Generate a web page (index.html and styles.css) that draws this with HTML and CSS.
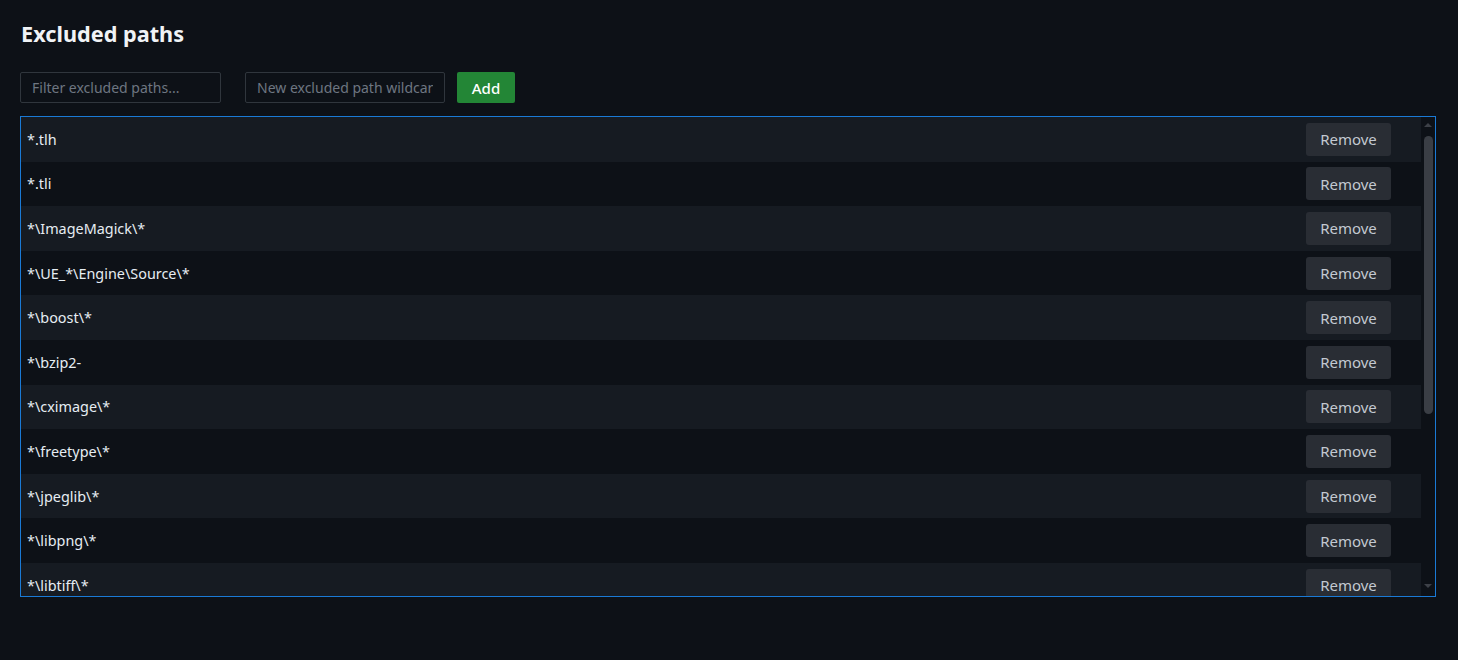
FILE: index.html
```html
<!DOCTYPE html>
<html lang="en">
<head>
<meta charset="utf-8">
<title>Excluded paths</title>
<link rel="stylesheet" href="styles.css">
</head>
<body>
<main class="page">
  <h1 class="title">Excluded paths</h1>
  <div class="toolbar">
    <input class="field" type="text" placeholder="Filter excluded paths...">
    <input class="field field-new" type="text" placeholder="New excluded path wildcard">
    <button class="btn-add">Add</button>
  </div>
  <div class="list">
    <div class="rows">
      <div class="row"><span class="path">*.tlh</span><button class="btn-remove">Remove</button></div>
      <div class="row"><span class="path">*.tli</span><button class="btn-remove">Remove</button></div>
      <div class="row"><span class="path">*\ImageMagick\*</span><button class="btn-remove">Remove</button></div>
      <div class="row"><span class="path">*\UE_*\Engine\Source\*</span><button class="btn-remove">Remove</button></div>
      <div class="row"><span class="path">*\boost\*</span><button class="btn-remove">Remove</button></div>
      <div class="row"><span class="path">*\bzip2-</span><button class="btn-remove">Remove</button></div>
      <div class="row"><span class="path">*\cximage\*</span><button class="btn-remove">Remove</button></div>
      <div class="row"><span class="path">*\freetype\*</span><button class="btn-remove">Remove</button></div>
      <div class="row"><span class="path">*\jpeglib\*</span><button class="btn-remove">Remove</button></div>
      <div class="row"><span class="path">*\libpng\*</span><button class="btn-remove">Remove</button></div>
      <div class="row"><span class="path">*\libtiff\*</span><button class="btn-remove">Remove</button></div>
    </div>
    <div class="scrollbar" aria-hidden="true">
      <div class="arrow arrow-up"></div>
      <div class="track"><div class="thumb"></div></div>
      <div class="arrow arrow-down"></div>
    </div>
  </div>
</main>
</body>
</html>
```

FILE: styles.css
```css
html, body {
  margin: 0;
  padding: 0;
  background: #0d1117;
  color: #e6edf3;
  font-family: "Noto Sans", "Open Sans", sans-serif;
}

.page {
  padding: 18px 22px 0 20px;
}

.title {
  margin: 0 0 22px 1px;
  font-size: 21.7px;
  font-weight: 700;
  line-height: 32px;
  color: #f0f3f6;
}

.toolbar {
  display: flex;
  align-items: center;
  margin-bottom: 13px;
}

.field {
  box-sizing: border-box;
  width: 201px;
  height: 31px;
  margin: 0 24px 0 0;
  padding: 0 11px;
  background: #0d1117;
  border: 1px solid #30363d;
  border-radius: 2px;
  color: #e6edf3;
  font-family: inherit;
  font-size: 14px;
  outline: none;
}

.field::placeholder {
  color: #6e7681;
}

.field-new {
  width: 200px;
  margin-right: 12px;
}

.btn-add {
  box-sizing: border-box;
  width: 58px;
  height: 31px;
  border: none;
  border-radius: 2px;
  background: #238636;
  color: #ffffff;
  font-family: inherit;
  font-size: 15px;
  font-weight: 500;
  cursor: pointer;
}

.list {
  box-sizing: border-box;
  height: 481px;
  border: 1px solid #1a7ad6;
  display: flex;
  overflow: hidden;
}

.rows {
  flex: 1;
  min-width: 0;
  overflow: hidden;
}

.row {
  display: flex;
  align-items: center;
  justify-content: space-between;
  height: 44.6px;
  padding: 0 30px 0 6px;
}

.row:nth-child(odd) {
  background: #161b22;
}

.path {
  font-size: 14.4px;
  color: #e6edf3;
}

.btn-remove {
  box-sizing: border-box;
  width: 85px;
  height: 33px;
  border: none;
  border-radius: 3px;
  background: #292d34;
  color: #c3c9d1;
  font-family: inherit;
  font-size: 15px;
  cursor: pointer;
}

.scrollbar {
  width: 14px;
  flex: none;
  display: flex;
  flex-direction: column;
  align-items: center;
  background: #0d1117;
}

.arrow {
  width: 0;
  height: 0;
  border-left: 4.5px solid transparent;
  border-right: 4.5px solid transparent;
}

.arrow-up {
  margin: 6px 0 0;
  border-bottom: 4px solid #3d4148;
}

.arrow-down {
  margin: 0 0 8px;
  border-top: 4px solid #3d4148;
}

.track {
  flex: 1;
  width: 100%;
  display: flex;
  justify-content: center;
  padding-top: 9px;
}

.thumb {
  width: 9px;
  height: 278px;
  border-radius: 5px;
  background: #3a3e45;
}
```
